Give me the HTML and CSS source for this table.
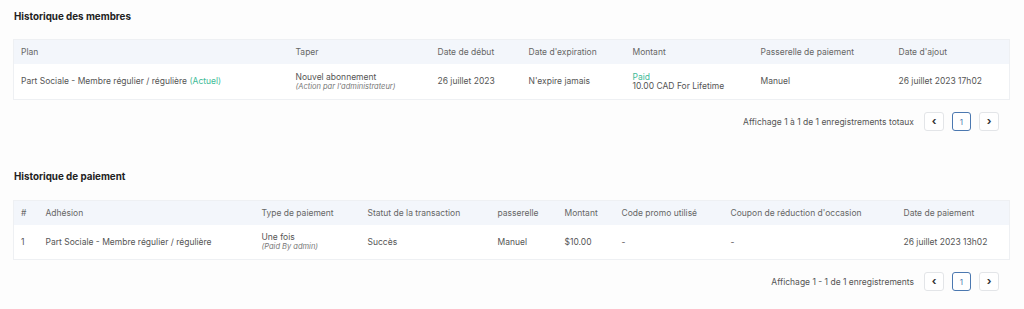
FILE: index.html
```html
<!DOCTYPE html>
<html lang="fr">
<head>
    <meta charset="UTF-8">
    <title>Historique</title>
    <link rel="stylesheet" href="styles.css">
</head>
<body>
    <section class="block first">
        <h2>Historique des membres</h2>
        <table class="grid">
            <colgroup>
                <col style="width:275px"><col style="width:142px"><col style="width:91px"><col style="width:104px"><col style="width:128px"><col style="width:138px"><col>
            </colgroup>
            <thead>
                <tr><th>Plan</th><th>Taper</th><th>Date de début</th><th>Date d'expiration</th><th>Montant</th><th>Passerelle de paiement</th><th>Date d'ajout</th></tr>
            </thead>
            <tbody>
                <tr class="tall">
                    <td>Part Sociale - Membre régulier / régulière <span class="green">(Actuel)</span></td>
                    <td>Nouvel abonnement<br><em>(Action par l'administrateur)</em></td>
                    <td>26 juillet 2023</td>
                    <td>N'expire jamais</td>
                    <td><span class="green">Paid</span><br>10.00 CAD For Lifetime</td>
                    <td>Manuel</td>
                    <td>26 juillet 2023 17h02</td>
                </tr>
            </tbody>
        </table>
        <div class="pager">
            <span>Affichage 1 à 1 de 1 enregistrements totaux</span>
            <button class="nav">&#8249;</button>
            <button class="page">1</button>
            <button class="nav">&#8250;</button>
        </div>
    </section>

    <section class="block second">
        <h2>Historique de paiement</h2>
        <table class="grid">
            <colgroup>
                <col style="width:25px"><col style="width:216px"><col style="width:106px"><col style="width:130px"><col style="width:67px"><col style="width:57px"><col style="width:109px"><col style="width:173px"><col>
            </colgroup>
            <thead>
                <tr><th>#</th><th>Adhésion</th><th>Type de paiement</th><th>Statut de la transaction</th><th>passerelle</th><th>Montant</th><th>Code promo utilisé</th><th>Coupon de réduction d'occasion</th><th>Date de paiement</th></tr>
            </thead>
            <tbody>
                <tr>
                    <td>1</td>
                    <td>Part Sociale - Membre régulier / régulière</td>
                    <td>Une fois<br><em>(Paid By admin)</em></td>
                    <td>Succès</td>
                    <td>Manuel</td>
                    <td>$10.00</td>
                    <td>-</td>
                    <td>-</td>
                    <td>26 juillet 2023 13h02</td>
                </tr>
            </tbody>
        </table>
        <div class="pager">
            <span>Affichage 1 - 1 de 1 enregistrements</span>
            <button class="nav">&#8249;</button>
            <button class="page">1</button>
            <button class="nav">&#8250;</button>
        </div>
    </section>
</body>
</html>
```

FILE: styles.css
```css
body {
    margin: 0;
    padding: 0 14px 0 13px;
    background: #fdfdfd;
    font-family: Inter, "Open Sans", sans-serif;
    font-size: 8.5px;
    color: #555;
}
h2 {
    margin: 0;
    font-size: 9.8px;
    font-weight: 700;
    color: #222;
    padding-left: 1px;
}
.first {
    padding-top: 11px;
}
.first h2 {
    margin-bottom: 17px;
}
.second {
    padding-top: 40px;
}
.second h2 {
    margin-bottom: 18px;
}
.grid {
    width: 100%;
    border-collapse: collapse;
    table-layout: fixed;
    border: 1px solid #eef0f3;
    background: #fff;
}
.grid th {
    background: #f3f6fb;
    font-weight: 400;
    color: #666;
    text-align: left;
    height: 24px;
    padding: 0 7px;
    white-space: nowrap;
}
.grid td {
    height: 34px;
    padding: 0 7px;
    line-height: 9px;
    white-space: nowrap;
}
.grid .tall td {
    height: 35px;
}
.grid em {
    font-size: 7.5px;
    color: #777;
}
.green {
    color: #3dbb97;
}
.pager {
    display: flex;
    align-items: center;
    justify-content: flex-end;
    gap: 8px;
    padding: 12px 11px 0 0;
    color: #555;
}
.pager span {
    margin-right: 2px;
}
.pager button {
    width: 20px;
    height: 19px;
    border: 1px solid #e3e5e8;
    border-radius: 3px;
    background: #fff;
    font-family: inherit;
    font-size: 11px;
    font-weight: 700;
    color: #333;
    padding: 0;
    line-height: 1;
}
.pager .page {
    width: 19px;
    border-color: #4b78b0;
    font-size: 8px;
    font-weight: 400;
    color: #4b78b0;
}
```
